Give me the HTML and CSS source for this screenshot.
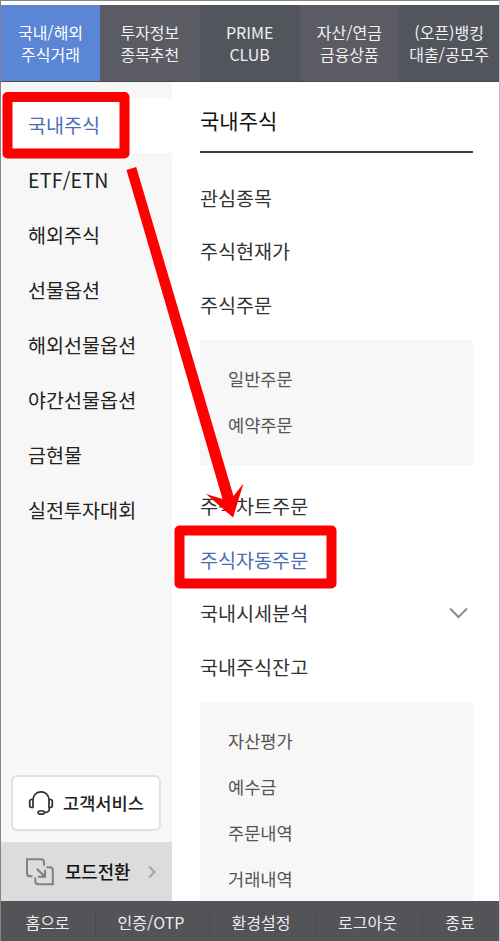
FILE: index.html
```html
<!DOCTYPE html>
<html lang="ko">
<head>
<meta charset="utf-8">
<title>국내주식 메뉴</title>
<link rel="stylesheet" href="styles.css">
</head>
<body>
<div class="app">
  <nav class="tabs">
    <a class="tab active">국내/해외<br>주식거래</a>
    <a class="tab">투자정보<br>종목추천</a>
    <a class="tab">PRIME<br>CLUB</a>
    <a class="tab">자산/연금<br>금융상품</a>
    <a class="tab">(오픈)뱅킹<br>대출/공모주</a>
  </nav>
  <main class="body">
    <aside class="side">
      <ul class="categories">
        <li class="active">국내주식</li>
        <li><span class="latin">ETF/ETN</span></li>
        <li>해외주식</li>
        <li>선물옵션</li>
        <li>해외선물옵션</li>
        <li>야간선물옵션</li>
        <li>금현물</li>
        <li>실전투자대회</li>
      </ul>
      <a class="service">
        <svg width="26" height="26" viewBox="0 0 26 26" fill="none" stroke="#2c2c2c" stroke-width="1.700" stroke-linecap="round" stroke-linejoin="round">
          <path d="M5 9.500C5.500 4.800 8.700 1.800 13 1.800s7.500 3 8 7.700M5 9.500H3.600C2.300 9.500 1.700 10.200 1.700 11.400v4.200c0 1.200.6 1.900 1.900 1.900H5zM21 9.500h1.400c1.200 0 1.900.7 1.900 1.900v4.200c0 1.200-.7 1.900-1.900 1.900H21zM21.300 17.500v1.700c0 2-1.500 3-4.300 3.300"/>
          <rect x="10" y="21" width="6.500" height="3.200" rx="1.600"/>
        </svg>
        <span>고객서비스</span>
      </a>
      <a class="mode">
        <svg width="28" height="28" viewBox="0 0 28 28" fill="none" stroke="#808080" stroke-width="2">
          <path d="M6.500 18.200H4a3 3 0 0 1-3-3V1.200h14a3 3 0 0 1 3 3v3.300M20.500 9.300h3.300a3 3 0 0 1 3 3v14H12.300a3 3 0 0 1-3-3v-3.800M10.800 10.800l7.700 7.500M19 12v6.700h-7"/>
        </svg>
        <span>모드전환</span>
        <svg class="next" width="8" height="14" viewBox="0 0 8 14" fill="none" stroke="#a0a0a0" stroke-width="1.800"><path d="M1 1.500 6.500 7 1 12.500"/></svg>
      </a>
    </aside>
    <section class="content">
      <h1>국내주식</h1>
      <ul class="menu">
        <li>관심종목</li>
        <li>주식현재가</li>
        <li>주식주문</li>
      </ul>
      <ul class="sub">
        <li>일반주문</li>
        <li>예약주문</li>
      </ul>
      <ul class="menu">
        <li>주식차트주문</li>
        <li class="selected">주식자동주문</li>
        <li>국내시세분석
          <svg width="20" height="12" viewBox="0 0 20 12" fill="none" stroke="#8c8c8c" stroke-width="2"><path d="M1 1.500 9.500 10 18 1.500"/></svg>
        </li>
        <li>국내주식잔고</li>
      </ul>
      <ul class="sub last">
        <li>자산평가</li>
        <li>예수금</li>
        <li>주문내역</li>
        <li>거래내역</li>
      </ul>
    </section>
  </main>
  <footer class="bottom">
    <a>홈으로</a>
    <a>인증/OTP</a>
    <a>환경설정</a>
    <a>로그아웃</a>
    <a>종료</a>
  </footer>
  <svg class="marks" width="500" height="941" viewBox="0 0 500 941">
    <g fill="none" stroke="#fe0000" stroke-width="10">
      <path d="M7.500 97h117v56.500h-117z" stroke-linejoin="round"/>
      <path d="M179.500 530.500h152v53h-152z" stroke-linejoin="round"/>
    </g>
    <path fill="#fe0000" d="M126.500 170 136.200 167 233.500 496 243.500 483.500 233 517.500 206 494 222.500 499z"/>
  </svg>
</div>
</body>
</html>
```
FILE: styles.css
```css
* { box-sizing: border-box; }
body { margin: 0; }
ul, h1 { margin: 0; padding: 0; list-style: none; font-weight: 400; }

.app {
  position: relative;
  width: 500px;
  height: 941px;
  display: flex;
  flex-direction: column;
  overflow: hidden;
  padding-top: 4px;
  border: 1px solid #858585;
  border-bottom: 0;
  border-right-color: #c4c4c4;
  background: #fff;
  font-family: "Noto Sans CJK KR", sans-serif;
  color: #222;
}

.tabs {
  display: grid;
  grid-template-columns: 99px repeat(4, 1fr);
  height: 77px;
  flex: none;
  border-bottom: 1px solid #484a52;
}
.tab {
  display: flex;
  align-items: center;
  justify-content: center;
  padding-top: 1px;
  background: #53555d;
  color: #f1f1f3;
  font-size: 16px;
  line-height: 21.500px;
  text-align: center;
  white-space: nowrap;
}
.tab:nth-child(even) { background: #5a5b63; }
.tab.active { background: #5a86d5; color: #fff; }

.body {
  flex: 1;
  min-height: 0;
  display: grid;
  grid-template-columns: 171px 1fr;
}

.side {
  display: flex;
  flex-direction: column;
  background: #f7f7f7;
  padding-top: 16px;
}
.categories li {
  height: 55px;
  padding-left: 27px;
  font-size: 19.600px;
  line-height: 53px;
  white-space: nowrap;
}
.categories .active { background: #fff; color: #4a70b4; }
.latin { letter-spacing: 0.2px; }

.service {
  display: flex;
  align-items: center;
  gap: 9px;
  width: 150px;
  height: 56px;
  margin: auto 0 11px 10px;
  padding-left: 15px;
  border: 2px solid #e1e1e1;
  border-radius: 6px;
  background: #fff;
  font-size: 17.600px;
  font-weight: 500;
  white-space: nowrap;
}
.service svg { flex: none; }
.service span { margin-top: -2px; }
.mode {
  display: flex;
  align-items: center;
  height: 59px;
  padding-left: 25px;
  background: #dcdcdc;
  color: #111;
  font-size: 17.800px;
  font-weight: 500;
}
.mode span { margin: -2px 0 0 11px; }
.mode .next { margin-left: 18px; }

.content { padding: 0 26px 0 28px; overflow: hidden; }
.content h1 {
  height: 71px;
  margin-bottom: 18px;
  padding-top: 7px;
  border-bottom: 2px solid #3d3d3d;
  color: #111;
  font-size: 21px;
  line-height: 62px;
}
.menu li {
  display: flex;
  align-items: center;
  justify-content: space-between;
  height: 53.500px;
  padding-right: 4px;
  color: #333;
  font-size: 19.600px;
  line-height: 1;
}
.menu .selected { color: #4a70b4; }
.sub {
  margin: 8px 0 15px;
  padding: 16px 28px 17px;
  background: #f7f7f7;
  color: #555;
  font-size: 17.600px;
}
.sub li { height: 46px; line-height: 46px; }
.sub.last { height: 220px; }

.bottom {
  flex: none;
  display: grid;
  grid-template-columns: 93px 114px 106px 107px 1fr;
  height: 40px;
  background: #535358;
  color: #eee;
  font-size: 16px;
  line-height: 43px;
  text-align: center;
}
.bottom a { position: relative; }
.bottom a + a::before {
  content: "";
  position: absolute;
  left: 1px;
  top: 12px;
  width: 1px;
  height: 22px;
  background: #49494e;
}

.marks { position: absolute; left: -1px; top: -1px; }
```
